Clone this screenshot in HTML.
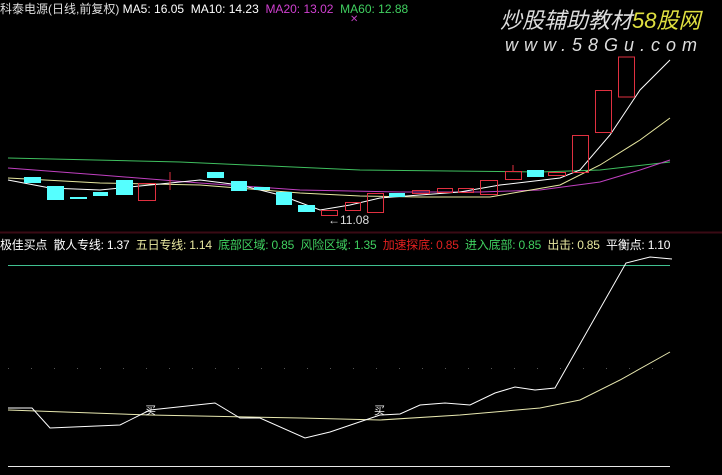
<!DOCTYPE html>
<html><head><meta charset="utf-8"><style>
body{margin:0;background:#000;width:722px;height:475px;overflow:hidden;position:relative;font-family:"Liberation Sans","Noto Sans CJK SC",sans-serif;font-size:12px}
.t{position:absolute;white-space:nowrap;line-height:14px}
</style></head><body>
<svg width="722" height="475" style="position:absolute;left:0;top:0">
<line x1="0" y1="232.5" x2="722" y2="232.5" stroke="#3a0a14" stroke-width="2"/>
<g fill="none" stroke-width="1">
<polyline stroke="#3fbf5f" points="8,158 180,162 360,170 540,172 600,170 670,162"/>
<polyline stroke="#c040c0" points="8,168 100,175 200,183 300,190 400,192 480,192 540,190 600,182 640,170 670,160"/>
<polyline stroke="#e8e8a0" points="8,178 100,183 200,185 300,193 360,196 420,197 490,197 560,185 600,165 640,140 670,118"/>
<polyline stroke="#fff" points="8,180 50,188 100,190 150,185 200,180 240,185 280,195 320,210 350,205 380,198 420,195 460,192 500,185 560,178 580,170 610,135 640,90 670,60"/>
</g>
<g fill="#55ffff">
<rect x="24" y="177" width="17" height="6"/><rect x="47" y="186" width="17" height="14"/><rect x="70" y="197" width="17" height="2"/><rect x="93" y="192" width="15" height="4"/><rect x="116" y="180" width="17" height="15"/><rect x="207" y="172" width="17" height="6"/><rect x="231" y="181" width="16" height="10"/><rect x="254" y="187" width="16" height="3"/><rect x="276" y="192" width="16" height="13"/><rect x="298" y="205" width="17" height="7"/><rect x="389" y="193" width="16" height="4"/><rect x="527" y="170" width="17" height="7"/>
</g>
<g fill="none" stroke="#e03040">
<rect x="138.5" y="183.5" width="17" height="17"/><rect x="321.5" y="210.5" width="16" height="5"/><rect x="345.5" y="202.5" width="15" height="8"/><rect x="367.5" y="193.5" width="16" height="19"/><rect x="412.5" y="190.5" width="17" height="3"/><rect x="437.5" y="188.5" width="15" height="4"/><rect x="458.5" y="188.5" width="15" height="4"/><rect x="480.5" y="180.5" width="17" height="14"/><rect x="505.5" y="171.5" width="16" height="8"/><rect x="548.5" y="172.5" width="17" height="3"/><rect x="572.5" y="135.5" width="16" height="37"/><rect x="595.5" y="90.5" width="16" height="42"/><rect x="618.5" y="57" width="16" height="40"/>
<line x1="170" y1="172" x2="170" y2="190"/><line x1="513" y1="165" x2="513" y2="172"/>
</g>
<g fill="none" stroke-width="1">
<line x1="8" y1="265.5" x2="670" y2="265.5" stroke="#40c090"/>
<line x1="8" y1="368.5" x2="670" y2="368.5" stroke="#555" stroke-dasharray="1,22"/>
<line x1="8" y1="466.5" x2="670" y2="466.5" stroke="#e8e8e8"/>
<polyline stroke="#e8e8b0" points="8,410 150,415 300,418 380,420 460,415 540,408 580,400 620,380 670,352"/>
<polyline stroke="#fff" points="8,408 32,408 50,428 120,425 150,410 215,403 240,418 260,418 305,438 330,432 380,415 400,414 420,405 445,403 470,405 495,393 515,387 535,390 555,388 626,263 650,257 672,259"/>
</g>
</svg>
<div class="t" style="left:0px;top:2px;color:#ddd">科泰电源(日线,前复权) <span style="color:#fff">MA5: 16.05</span> &nbsp;<span style="color:#fff">MA10: 14.23</span> &nbsp;<span style="color:#d040d0">MA20: 13.02</span> &nbsp;<span style="color:#40d060">MA60: 12.88</span></div>
<div class="t" style="left:350px;top:13px;color:#c040c0;font-size:10px">✕</div>
<div class="t" style="left:328px;top:213px;color:#ddd">←11.08</div>
<div class="t" style="left:500px;top:8px;color:#ddd;font-size:22px;line-height:26px;font-style:italic">炒股辅助教材<span style="color:#e0e040">58股网</span></div>
<div class="t" style="left:505px;top:38px;color:#ddd;font-size:18px;letter-spacing:6px;font-style:italic">www.58Gu.com</div>
<div class="t" style="left:0px;top:238px;color:#fff;letter-spacing:-0.2px">极佳买点 &nbsp;散人专线: 1.37 &nbsp;<span style="color:#e8e8a0">五日专线: 1.14</span> &nbsp;<span style="color:#40d060">底部区域: 0.85</span> &nbsp;<span style="color:#40d060">风险区域: 1.35</span> &nbsp;<span style="color:#e02020">加速探底: 0.85</span> &nbsp;<span style="color:#40d060">进入底部: 0.85</span> &nbsp;<span style="color:#e8e8a0">出击: 0.85</span> &nbsp;平衡点: 1.10</div>
<div class="t" style="left:145px;top:404px;color:#eee;font-size:11px">买</div>
<div class="t" style="left:374px;top:404px;color:#eee;font-size:11px">买</div>
</body></html>
